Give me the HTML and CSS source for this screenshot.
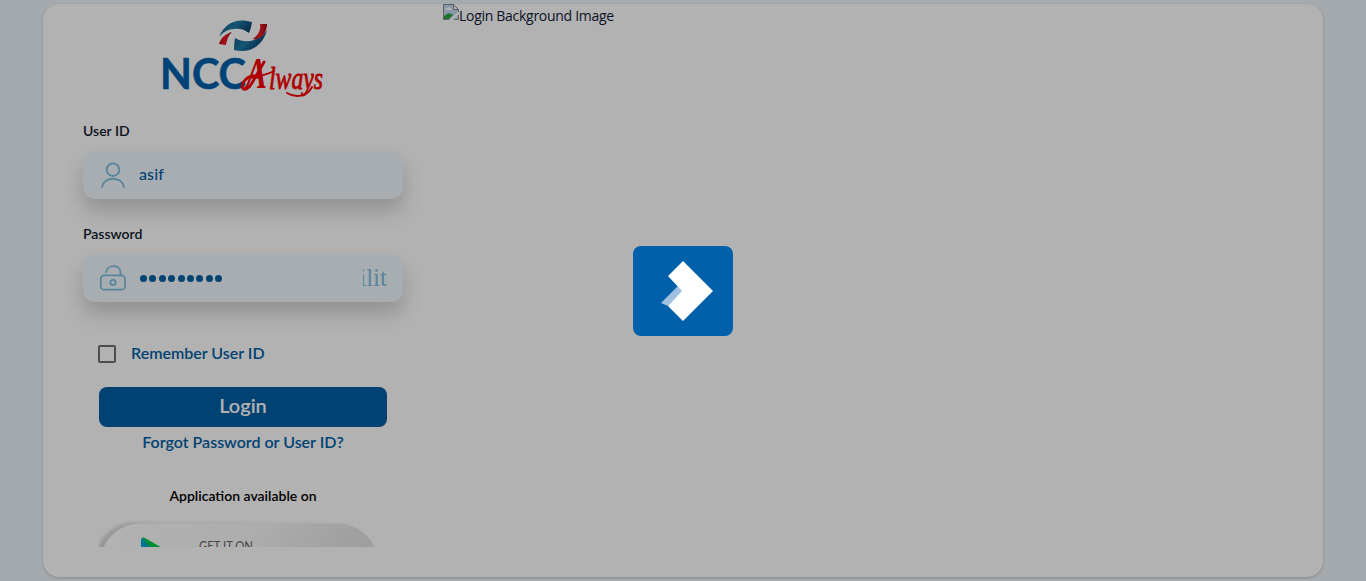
FILE: index.html
```html
<!DOCTYPE html>
<html lang="en">
<head>
<meta charset="utf-8">
<title>NCC Always</title>
<link rel="stylesheet" href="styles.css">
</head>
<body>
<main class="card">
  <section class="panel">
    <svg class="logo" viewBox="0 0 162 80" role="img" aria-label="NCC Always">
      <defs>
        <linearGradient id="blue" x1="0" y1="0" x2="1" y2=".5"><stop offset="0" stop-color="#0e4978"/><stop offset=".5" stop-color="#1f7ba6"/><stop offset="1" stop-color="#083d69"/></linearGradient>
        <linearGradient id="red" x1="0" y1="0" x2="1" y2="0"><stop offset="0" stop-color="#b20b16"/><stop offset=".5" stop-color="#ee1925"/><stop offset="1" stop-color="#9c0916"/></linearGradient>
      </defs>
      <path fill="url(#blue)" d="M57 18C62 5 74-2 90 3q-1 7-3 11c-5-4-10-5-15-4-6 0-11 3-15 8z"/>
      <path fill="url(#blue)" d="M73 19c7 4 13 4 19 2 5-2 10-5 13-10-4 15-16 24-33 20q0-6 1-12z"/>
      <path fill="url(#red)" d="M57 25c2-6 6-10 13-12-4 4-5 8-6 13l-7-1z"/>
      <path fill="url(#red)" d="M98 5h7c0 6-3 12-8 14-2 1-4 2-6 1 5-4 8-8 7-15z"/>
      <text class="logo-ncc" x="-2" y="69.500" textLength="86" lengthAdjust="spacingAndGlyphs">NCC</text>
      <text class="logo-a" x="84" y="69" textLength="21" lengthAdjust="spacingAndGlyphs">A</text>
      <text class="logo-ways" x="107" y="70" textLength="54" lengthAdjust="spacingAndGlyphs">lways</text>
      <path fill="none" stroke="#fa0000" stroke-width="2.800" stroke-linecap="round" d="M93 57c-7-1-13 6-13 11 2 5 7 1 10-4L102 43"/>
      <path fill="none" stroke="#fa0000" stroke-width="1.800" stroke-linecap="round" d="M92 59c7-3 13-3 20-7M125 74c8 5 20 4 25-6"/>
    </svg>
    <form class="form">
      <label class="label" for="user">User ID</label>
      <div class="field">
        <svg class="icon" viewBox="0 0 28 28"><circle cx="14" cy="8.700" r="6.300"/><path d="M3 26C5 15 23 15 25 26"/></svg>
        <input id="user" class="input" type="text" value="asif">
      </div>
      <label class="label" for="pass">Password</label>
      <div class="field">
        <svg class="icon" viewBox="0 0 28 28"><rect x="1.800" y="11.300" width="24.200" height="14.400" rx="3.500"/><circle cx="14" cy="18.400" r="2.600"/><path d="M7 8.300C8.700-.2 21.500.4 21.500 8.500v2.800"/></svg>
        <div class="dots"><i></i><i></i><i></i><i></i><i></i><i></i><i></i><i></i><i></i></div>
        <span class="eye"><span>ilit</span></span>
      </div>
      <label class="remember"><span class="box"></span><span class="remember-text">Remember User ID</span></label>
      <button class="login" type="button">Login</button>
      <a class="forgot">Forgot Password or User ID?</a>
      <p class="available">Application available on</p>
      <svg class="store" viewBox="0 0 290 27">
        <defs>
          <linearGradient id="pill" x1="0" x2="1" y1=".5" y2=".7"><stop offset="0" stop-color="#fff"/><stop offset=".45" stop-color="#f8f8f8"/><stop offset="1" stop-color="#dcdcdc"/></linearGradient>
          <linearGradient id="rim" x1="0" x2="1"><stop offset="0" stop-color="#d5d5d5"/><stop offset=".25" stop-color="#ededed"/><stop offset="1" stop-color="#fff"/></linearGradient>
          <filter id="soft"><feGaussianBlur stdDeviation="1.800"/></filter>
        </defs>
        <rect x="-4" y="2" width="282" height="80" rx="40" fill="url(#rim)" filter="url(#soft)"/>
        <rect x="1" y="3.500" width="278" height="80" rx="40" fill="url(#pill)"/>
        <path fill="#00a7d5" d="M42 20q0-3 3-2l15 15H42z"/>
        <path fill="#00ca50" d="M43 18q1-1 3 0l26 15H56z"/>
        <text class="store-text" x="100" y="31" textLength="54" lengthAdjust="spacingAndGlyphs">GET IT ON</text>
      </svg>
    </form>
  </section>
  <section class="hero">
    <svg class="broken" viewBox="0 0 16 16">
      <path fill="#c5d8f5" d="M.5.5h10l5 5v10H.5z"/>
      <path fill="#fff" d="M2 6q0-2 2-2 2-2 3 0 2 0 2 2z"/>
      <path fill="#2da543" d="M1 15v-3q5-5 9-1l-4 4z"/>
      <path fill="#fff" d="M6 16L16 7v3l-6 6zM10.500.5v5h5z"/>
      <path fill="none" stroke="#8b8b8b" d="M6 15.500H.5V.5h10l5 5V8M10.500.5v5h5M15.500 11v4.500H11"/>
    </svg><span>Login Background Image</span>
  </section>
</main>
<div class="overlay">
  <div class="loader">
    <svg viewBox="0 0 100 90"><path fill="#9fc1df" d="M45 40L28 57l7 3 15-15z"/><path fill="#fff" d="M50 15l30 30-30 30-15-15 14-15-14-15z"/></svg>
  </div>
</div>
</body>
</html>
```
FILE: styles.css
```css
* { box-sizing: border-box; }
body { margin: 0; height: 581px; overflow: hidden; padding-top: 4px; background: #edf4f9; font-family: Lato, sans-serif; font-weight: 500; }
.card { display: flex; width: 1280px; height: 573px; margin: 0 auto; background: #fff; border-radius: 16px; box-shadow: 0 1px 3px rgba(0,0,0,.2); }
.panel { width: 400px; height: 543px; overflow: hidden; padding: 15px 40px 0; }
.logo { display: block; width: 162px; height: 80px; margin: 0 auto; overflow: visible; }
.logo-ncc { font: 700 42.5px Lato, sans-serif; fill: #0060a9; stroke: #0060a9; stroke-width: .6; }
.logo-a { font: italic bold 44px "Liberation Serif", serif; fill: #fa0000; }
.logo-ways { font: italic 31px "Liberation Serif", serif; fill: #fa0000; stroke: #fa0000; stroke-width: .8; }
.form { display: flex; flex-direction: column; }
.label { height: 17px; margin-top: 23px; font-size: 14px; line-height: 17px; font-weight: 600; color: #10192b; }
.field { display: flex; align-items: center; height: 48px; margin-top: 12px; padding: 0 16px; border-radius: 12px; background: #f0f8fe; box-shadow: 0 12px 20px rgba(0,0,0,.18); }
.field + .label { margin-top: 26px; }
.icon { width: 28px; height: 28px; fill: none; stroke: #80bfdf; stroke-width: 1.8; stroke-linecap: round; }
.input { width: 200px; margin-left: 12px; padding: 0 0 4px; border: 0; outline: 0; background: transparent; font: 500 16px Lato, sans-serif; letter-spacing: .1px; color: #0060a5; }
.dots { display: flex; gap: 2.4px; margin-left: 13px; }
.dots i { width: 7px; height: 7px; border-radius: 50%; background: #0060a5; }
.eye { display: flex; justify-content: flex-end; width: 24px; margin: 0 0 0 auto; overflow: hidden; font: 25px/30px "Liberation Serif", serif; color: #80bfdf; }
.remember { display: flex; align-items: center; gap: 15px; height: 20px; margin: 42px 0 0 15px; font-size: 16px; font-weight: 600; color: #0060a5; }
.remember-text { padding-bottom: 3px; }
.box { width: 18px; height: 18px; border: 2px solid #707070; border-radius: 2px; }
.login { width: 288px; height: 40px; margin: 23px auto 0; padding: 0 0 5px; border: 0; border-radius: 8px; background: #0060a5; color: #fff; font: 600 20px Lato, sans-serif; }
.forgot { margin-top: 5px; text-align: center; font-size: 16px; line-height: 20px; font-weight: 600; color: #0060a5; }
.available { margin: 35px 0 0; text-align: center; font-size: 14px; line-height: 17px; color: #000; font-weight: 600; }
.store { display: block; width: 290px; height: 27px; margin: 16px 0 0 16px; overflow: hidden; }
.store-text { font: 13px Lato, sans-serif; fill: #666; }
.hero { display: flex; align-items: flex-start; font: 14px/23px "Open Sans", sans-serif; color: #101a35; }
.hero span { letter-spacing: -.29px; }
.broken { width: 16px; height: 16px; }
.overlay { position: fixed; inset: 0; display: flex; align-items: center; justify-content: center; background: rgba(0,0,0,.3); }
.loader { width: 100px; height: 90px; border-radius: 8px; background: #0060a9; }
.loader svg { display: block; width: 100px; height: 90px; }
```
